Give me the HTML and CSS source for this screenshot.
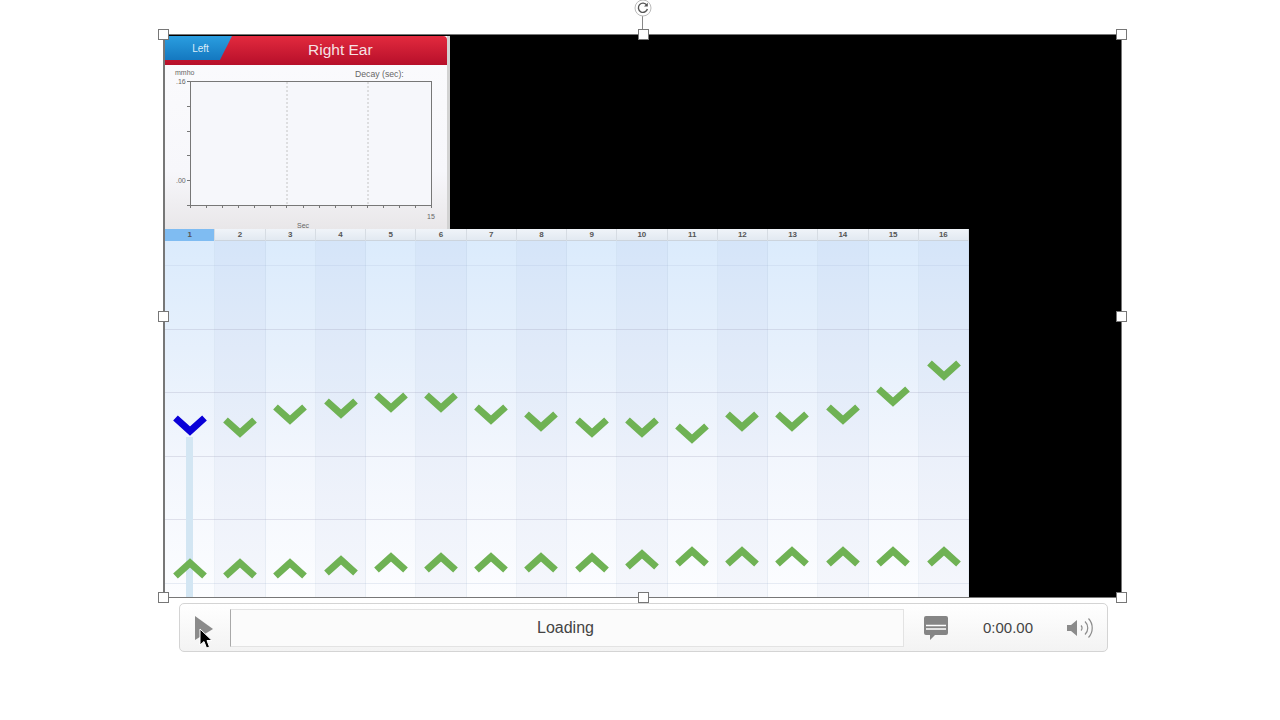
FILE: index.html
```html
<!DOCTYPE html>
<html lang="en">
<head>
    <meta charset="UTF-8">
    <title>Right Ear</title>
    <link rel="stylesheet" href="styles.css">
</head>
<body>
    <div class="stage">
        <div class="tymp">
            <div class="tymp-head">
                <div class="tab-left">Left</div>
                <div class="ear-title">Right Ear</div>
            </div>
            <svg class="tymp-plot" width="282" height="163" viewBox="165 65 282 163">
                <rect x="190.5" y="81.500" width="241" height="124" fill="#f6f7fb" stroke="#777"/>
                <path d="M287 82V205M368 82V205" stroke="#c4c4c4" stroke-dasharray="2 2"/>
                <path d="M187 81.500h4M187 106.500h4M187 131.500h4M187 155.500h4M187 180.500h4M187 205.500h4" stroke="#777"/>
                <path d="M190.500 205v3M206.500 205v3M222.500 205v3M238.500 205v3M254.500 205v3M270.500 205v3M286.500 205v3M303.500 205v3M319.500 205v3M335.500 205v3M351.500 205v3M367.500 205v3M383.500 205v3M399.500 205v3M415.500 205v3M431.500 205v3" stroke="#777"/>
                <text class="plot-label" x="175" y="75">mmho</text>
                <text class="plot-label" x="176" y="83.500">.16</text>
                <text class="plot-label" x="176" y="182.500">.00</text>
                <text class="plot-decay" x="355" y="77">Decay (sec):</text>
                <text class="plot-label" x="427" y="219">15</text>
                <text class="plot-label" x="297" y="227.500">Sec</text>
            </svg>
        </div>
        <div class="chart">
            <div class="chart-head">
                <div class="head-cell active">1</div>
                <div class="head-cell">2</div>
                <div class="head-cell">3</div>
                <div class="head-cell">4</div>
                <div class="head-cell">5</div>
                <div class="head-cell">6</div>
                <div class="head-cell">7</div>
                <div class="head-cell">8</div>
                <div class="head-cell">9</div>
                <div class="head-cell">10</div>
                <div class="head-cell">11</div>
                <div class="head-cell">12</div>
                <div class="head-cell">13</div>
                <div class="head-cell">14</div>
                <div class="head-cell">15</div>
                <div class="head-cell">16</div>
            </div>
            <div class="chart-body">
                <div class="col"></div><div class="col"></div><div class="col"></div><div class="col"></div>
                <div class="col"></div><div class="col"></div><div class="col"></div><div class="col"></div>
                <div class="col"></div><div class="col"></div><div class="col"></div><div class="col"></div>
                <div class="col"></div><div class="col"></div><div class="col"></div><div class="col"></div>
                <div class="rows">
                    <div class="row row-first"></div>
                    <div class="row"></div>
                    <div class="row"></div>
                    <div class="row"></div>
                    <div class="row"></div>
                    <div class="row row-last"></div>
                </div>
                <div class="current-bar"></div>
                <svg class="marks" width="804" height="356" viewBox="165 241 804 356">
                    <defs>
                        <path id="down" d="M-14.500 -7L0 6L14.500 -7" fill="none" stroke-width="7"/>
                        <path id="up" d="M-14.500 7L0 -6L14.500 7" fill="none" stroke-width="7"/>
                    </defs>
                    <use href="#down" x="190" y="425" stroke="#0a00d8"/>
                    <g stroke="#6fb254">
                        <use href="#down" x="240" y="427"/>
                        <use href="#down" x="290" y="414"/>
                        <use href="#down" x="341" y="408"/>
                        <use href="#down" x="391" y="402"/>
                        <use href="#down" x="441" y="402"/>
                        <use href="#down" x="491" y="414"/>
                        <use href="#down" x="541" y="421"/>
                        <use href="#down" x="592" y="427"/>
                        <use href="#down" x="642" y="427"/>
                        <use href="#down" x="692" y="433"/>
                        <use href="#down" x="742" y="421"/>
                        <use href="#down" x="792" y="421"/>
                        <use href="#down" x="843" y="414"/>
                        <use href="#down" x="893" y="396"/>
                        <use href="#down" x="944" y="370"/>
                        <use href="#up" x="190" y="569"/>
                        <use href="#up" x="240" y="569"/>
                        <use href="#up" x="290" y="569"/>
                        <use href="#up" x="341" y="566"/>
                        <use href="#up" x="391" y="563"/>
                        <use href="#up" x="441" y="563"/>
                        <use href="#up" x="491" y="563"/>
                        <use href="#up" x="541" y="563"/>
                        <use href="#up" x="592" y="563"/>
                        <use href="#up" x="642" y="560"/>
                        <use href="#up" x="692" y="557"/>
                        <use href="#up" x="742" y="557"/>
                        <use href="#up" x="792" y="557"/>
                        <use href="#up" x="843" y="557"/>
                        <use href="#up" x="893" y="557"/>
                        <use href="#up" x="944" y="557"/>
                    </g>
                </svg>
            </div>
        </div>

        <div class="rotate-line"></div>
        <svg class="rotate-knob" width="18" height="18" viewBox="0 0 18 18">
            <circle cx="9" cy="9" r="8" fill="#fff" stroke="#bbb"/>
            <path d="M12.800 6.200A4.600 4.600 0 1 0 13.400 10" fill="none" stroke="#555" stroke-width="1.400"/>
            <path d="M13.800 3.800V7.600H10Z" fill="#555"/>
        </svg>
        <div class="handle h-tl"></div>
        <div class="handle h-tc"></div>
        <div class="handle h-tr"></div>
        <div class="handle h-ml"></div>
        <div class="handle h-mr"></div>
        <div class="handle h-bl"></div>
        <div class="handle h-bc"></div>
        <div class="handle h-br"></div>
    </div>

    <div class="player">
        <div class="play-btn">
            <svg width="18" height="24" viewBox="0 0 18 24"><path d="M0 0L18 13L0 24Z" fill="#8b8b8b"/></svg>
        </div>
        <div class="progress">Loading</div>
        <svg class="caption-icon" width="24" height="24" viewBox="0 0 24 24">
            <path d="M2 0H22a2 2 0 0 1 2 2V17a2 2 0 0 1 -2 2H11L6 24V19H2a2 2 0 0 1 -2 -2V2a2 2 0 0 1 2 -2Z" fill="#858585"/>
            <path d="M2 9.500H22M2 13H22" stroke="#fff" stroke-width="1.400"/>
        </svg>
        <div class="time">0:00.00</div>
        <svg class="volume-icon" width="26" height="20" viewBox="0 0 26 20">
            <path d="M0 7H4L10 2V18L4 13H0Z" fill="#8b8b8b"/>
            <path d="M14 7.500a3.500 3.500 0 0 1 0 5M18 3.500a9 9 0 0 1 0 13M21.500 0.500a14 14 0 0 1 0 19" fill="none" stroke="#8b8b8b" stroke-width="1.200"/>
        </svg>
        <svg class="cursor" width="14" height="22" viewBox="0 0 14 22">
            <path d="M1 1V17L5 13.500L7.500 20L10.500 19L8 12.500H13Z" fill="#000" stroke="#fff"/>
        </svg>
    </div>
</body>
</html>
```

FILE: styles.css
```css
/* slide area and player */
body {
    margin: 0;
    background-color: #fff;
    font-family: 'Liberation Sans', Arial, sans-serif;
    color: #333;
    height: 720px;
    overflow: hidden;
}
.stage {
    position: relative;
    width: 957px;
    height: 562px;
    margin: 35px 0 0 164px;
    padding-top: 1px;
    background-color: #000;
    box-shadow: 0 0 0 1px #777;
    border-left: 1px solid #777;
    box-sizing: border-box;
}

/* tympanogram panel */
.tymp {
    width: 285px;
    height: 193px;
    background: linear-gradient(#fbfbfd, #f7f7fb 70%, #e9e7e9);
    border-right: 3px solid #d2d2d2;
    box-sizing: border-box;
}
.tymp-head {
    display: flex;
    position: relative;
    height: 29px;
    background: linear-gradient(#e22a3e, #b70f2a);
    border-top-right-radius: 4px;
}
.tab-left {
    width: 67px;
    height: 24px;
    padding-left: 4px;
    box-sizing: border-box;
    background: linear-gradient(#2a9ee0, #1478c0);
    clip-path: polygon(0 0, 100% 0, 82% 100%, 0 100%);
    color: #dcecf8;
    font-size: 10px;
    line-height: 26px;
    text-align: center;
}
.ear-title {
    position: absolute;
    left: 143px;
    top: 0;
    color: #f6e2e4;
    font-size: 15.500px;
    line-height: 27px;
}
.tymp-plot {
    display: block;
}
.plot-label {
    font-size: 7px;
    fill: #666;
}
.plot-decay {
    font-size: 8.700px;
    fill: #666;
}

/* tone grid */
.chart {
    width: 804px;
}
.chart-head {
    display: grid;
    grid-template-columns: repeat(16, 1fr);
    height: 12px;
    background: linear-gradient(#f0f4f9, #e2e9f1);
    border-bottom: 1px solid #ccd4dd;
    box-sizing: border-box;
}
.head-cell {
    border-right: 1px solid #d6dce3;
    color: #555;
    font-size: 8px;
    font-weight: 700;
    line-height: 12px;
    text-align: center;
}
.head-cell.active {
    background-color: #7fbcf2;
}
.chart-body {
    position: relative;
    display: grid;
    grid-template-columns: repeat(16, 1fr);
    height: 356px;
    background: linear-gradient(#dbebfc, #e6f0fc 30%, #f2f6fd 60%, #fcfdff);
}
.col {
    border-right: 1px solid rgba(150, 170, 200, 0.12);
}
.col:nth-child(even) {
    background-color: rgba(90, 120, 180, 0.045);
}
.rows {
    position: absolute;
    inset: 0;
    padding-top: 24px;
}
.row {
    height: 63.400px;
    border-top: 1px solid rgba(150, 150, 180, 0.25);
    box-sizing: border-box;
}
.row-first {
    height: 64px;
    border-top-color: rgba(150, 170, 200, 0.15);
}
.row-last {
    height: 14px;
    border-top-color: rgba(150, 170, 200, 0.2);
}
.current-bar {
    position: absolute;
    left: 21px;
    top: 196px;
    width: 7px;
    height: 160px;
    background-color: #d3e6f3;
}
.marks {
    position: absolute;
    left: 0;
    top: 0;
}

/* selection handles */
.rotate-line {
    position: absolute;
    left: 477px;
    top: -19px;
    width: 1px;
    height: 19px;
    background-color: #888;
}
.rotate-knob {
    position: absolute;
    left: 469px;
    top: -36px;
}
.handle {
    position: absolute;
    width: 9px;
    height: 9px;
    background-color: #fff;
    border: 1px solid #777;
}
.h-tl { left: -7px; top: -6px; }
.h-tc { left: 473px; top: -6px; }
.h-tr { left: 951px; top: -6px; }
.h-ml { left: -7px; top: 276px; }
.h-mr { left: 951px; top: 276px; }
.h-bl { left: -7px; top: 557px; }
.h-bc { left: 473px; top: 557px; }
.h-br { left: 951px; top: 557px; }

/* player bar */
.player {
    position: relative;
    display: flex;
    align-items: center;
    width: 929px;
    height: 49px;
    margin: 6px 0 0 179px;
    border: 1.500px solid #d4d4d4;
    border-radius: 5px;
    background: linear-gradient(#fff, #f3f3f3);
    box-sizing: border-box;
}
.play-btn {
    width: 50px;
    padding-left: 15px;
    box-sizing: border-box;
    line-height: 0;
}
.progress {
    width: 674px;
    height: 38px;
    background-color: #fbfbfb;
    border: 1px solid #e3e3e3;
    border-left-color: #a8a8a8;
    box-sizing: border-box;
    color: #444;
    font-size: 16px;
    line-height: 36px;
    text-align: center;
    padding-right: 3px;
}
.caption-icon {
    margin-left: 20px;
}
.time {
    width: 51px;
    margin-left: 35px;
    color: #444;
    font-size: 15px;
    white-space: nowrap;
}
.volume-icon {
    margin-left: 33px;
}
.cursor {
    position: absolute;
    left: 19px;
    top: 24px;
}
```
